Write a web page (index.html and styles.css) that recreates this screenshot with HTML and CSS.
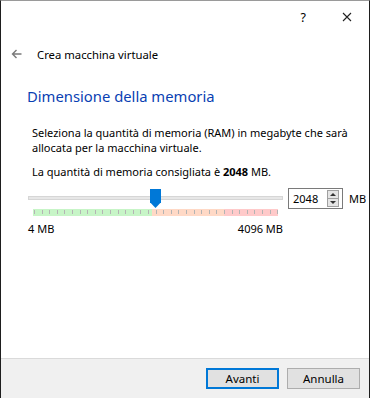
FILE: index.html
```html
<!DOCTYPE html>
<html lang="it">

<head>
    <meta charset="UTF-8">
    <title>Crea macchina virtuale</title>
    <link rel="stylesheet" href="styles.css">
</head>

<body>
    <div class="window">
        <div class="titlebar">
            <span class="help">?</span>
            <svg class="close" width="10" height="10" viewBox="0 0 10 10">
                <path d="M1 1 L9 9 M9 1 L1 9" stroke="#222" stroke-width="1.1" fill="none" />
            </svg>
        </div>

        <div class="header">
            <svg class="back" width="11" height="10" viewBox="0 0 11 10">
                <path d="M10.5 5 H1.5 M5.5 1 L1.5 5 L5.5 9" stroke="#7a7a7a" stroke-width="1.4" fill="none" />
            </svg>
            <span>Crea macchina virtuale</span>
        </div>

        <div class="content">
            <h1>Dimensione della memoria</h1>
            <p class="desc">Seleziona la quantità di memoria (RAM) in megabyte che sarà allocata per la macchina virtuale.</p>
            <p class="hint">La quantità di memoria consigliata è <b>2048</b> MB.</p>

            <div class="memory_row">
                <div class="slider">
                    <div class="groove">
                        <div class="thumb"></div>
                    </div>
                    <div class="ticks"></div>
                    <div class="limits">
                        <span>4 MB</span>
                        <span>4096 MB</span>
                    </div>
                </div>

                <div class="spinbox">
                    <span class="value">2048</span>
                    <div class="arrows">
                        <span class="up"></span>
                        <span class="down"></span>
                    </div>
                </div>
                <span class="unit">MB</span>
            </div>
        </div>

        <div class="footer">
            <button class="default">Avanti</button>
            <button>Annulla</button>
        </div>
    </div>
</body>

</html>
```

FILE: styles.css
```css
* {
    box-sizing: border-box;
}

body,
html {
    margin: 0;
    padding: 0;
    background-color: #ffffff;
    font-family: "Noto Sans", sans-serif;
    font-size: 11px;
    color: #000000;
}

.window {
    width: 370px;
    height: 398px;
    display: flex;
    flex-direction: column;
    border-left: 1px solid #1e1e1e;
    border-right: 1px solid #1e1e1e;
    border-top: 1px solid #9a9a9a;
    background-color: #ffffff;
}

.titlebar {
    height: 31px;
    display: flex;
    align-items: center;
    justify-content: flex-end;
    padding-right: 17px;
}

.help {
    font-size: 12.5px;
    margin-right: 36px;
    margin-top: 1px;
}

.header {
    height: 44px;
    display: flex;
    align-items: center;
    padding-left: 10px;
}

.header span {
    margin-left: 15px;
    font-size: 11.3px;
}

.content {
    flex: 1;
    padding: 0 0 0 26px;
}

h1 {
    margin: 10px 0 0;
    font-size: 14.8px;
    font-weight: normal;
    color: #0a3fb3;
}

.desc {
    margin: 19px 0 0 5px;
    width: 335px;
    line-height: 15px;
}

.hint {
    margin: 9px 0 0 5px;
}

.memory_row {
    display: flex;
    align-items: flex-start;
    margin-top: 5px;
}

.slider {
    width: 255px;
    margin-left: 1px;
}

.groove {
    position: relative;
    height: 4px;
    margin-top: 12px;
    background-color: #e7e7e7;
    border: 1px solid #d6d6d6;
}

.thumb {
    position: absolute;
    left: 121px;
    top: -8px;
    width: 11px;
    height: 19px;
    background-color: #0078d7;
    clip-path: polygon(0 0, 100% 0, 100% 70%, 50% 100%, 0 70%);
}

.ticks {
    height: 7px;
    margin: 9px 5px 0 5px;
    background:
        repeating-linear-gradient(to right, #b4b4b4 0 1px, transparent 1px 7.6px) 1px 1px / 100% 4px no-repeat,
        linear-gradient(to right, #c7f5c7 0 119px, #ffd9c6 119px 191px, #ffcaca 191px);
}

.limits {
    display: flex;
    justify-content: space-between;
    margin-top: 5px;
}

.spinbox {
    display: flex;
    align-items: center;
    justify-content: space-between;
    width: 55px;
    height: 21px;
    margin-left: 5px;
    margin-top: 4px;
    padding: 0 3px 0 4px;
    border: 1px solid #7a7a7a;
}

.arrows {
    display: flex;
    flex-direction: column;
    width: 12px;
    height: 17px;
    border: 1px solid #a0a0a0;
}

.arrows span {
    flex: 1;
    position: relative;
    background-color: #e5e5e5;
}

.arrows .up {
    border-bottom: 1px solid #a0a0a0;
}

.arrows .up::after,
.arrows .down::after {
    content: "";
    position: absolute;
    left: 2px;
    top: 2px;
    border-left: 3px solid transparent;
    border-right: 3px solid transparent;
}

.arrows .up::after {
    border-bottom: 3px solid #333;
}

.arrows .down::after {
    border-top: 3px solid #333;
}

.unit {
    margin-left: 6px;
    margin-top: 7px;
}

.footer {
    height: 40px;
    display: flex;
    justify-content: flex-end;
    align-items: center;
    gap: 8px;
    padding-right: 9px;
    background-color: #f0f0f0;
    border-top: 1px solid #dadada;
}

button {
    width: 73px;
    height: 21px;
    padding: 0;
    font-family: "Noto Sans", sans-serif;
    font-size: 11.5px;
    color: #000000;
    background-color: #e1e1e1;
    border: 1px solid #adadad;
}

button.default {
    border: 2px solid #0078d7;
}
```
